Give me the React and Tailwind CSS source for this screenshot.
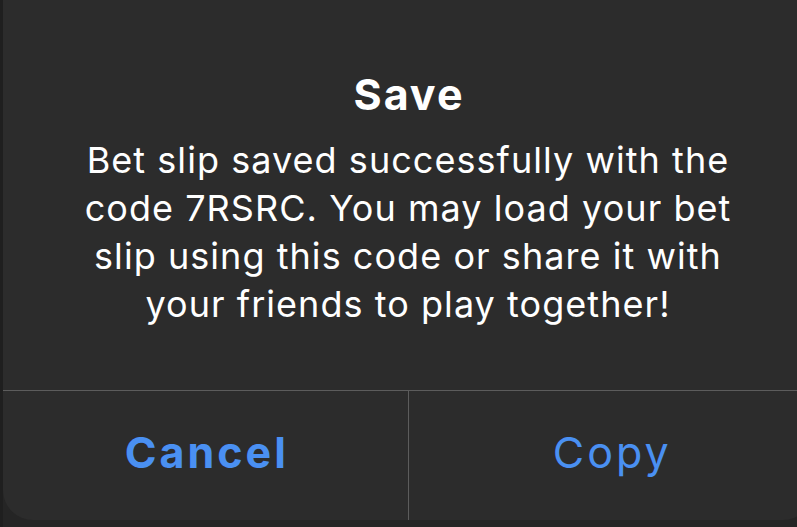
import React from 'react';

const App = () => {
    return (
        <div className="w-[797px] h-[527px] overflow-hidden bg-[#252525] flex" style={{ fontFamily: 'Inter, "Noto Sans", sans-serif' }}>
            {/* sliver of the page behind the alert */}
            <div className="w-[3px] shrink-0 bg-[#1f1f1f]" />

            <div className="w-[810px] shrink-0 h-[520px] rounded-b-[30px] bg-[#2c2c2c] flex flex-col">
                <div className="flex-1 flex flex-col items-center pt-[70px] text-center text-white">
                    <h2 className="text-[43px] leading-[48px] font-bold tracking-[2px] pl-[2px]">Save</h2>
                    <p className="mt-[18px] text-[36px] leading-[48px] tracking-[1.05px] whitespace-nowrap">
                        Bet slip saved successfully with the<br />
                        code 7RSRC. You may load your bet<br />
                        slip using this code or share it with<br />
                        your friends to play together!
                    </p>
                </div>

                <div className="h-[130px] flex border-t border-[#5c5c5c]">
                    <button type="button" className="flex-1 flex items-center justify-center pl-[3px] pb-[6px] text-[43px] font-bold tracking-[3px] text-[#4a90f2]">
                        Cancel
                    </button>
                    <div className="w-px bg-[#5c5c5c]" />
                    <button type="button" className="flex-1 flex items-center justify-center pl-[3px] pb-[6px] text-[43px] tracking-[3px] text-[#4a90f2]">
                        Copy
                    </button>
                </div>
            </div>
        </div>
    );
};

export default App;
